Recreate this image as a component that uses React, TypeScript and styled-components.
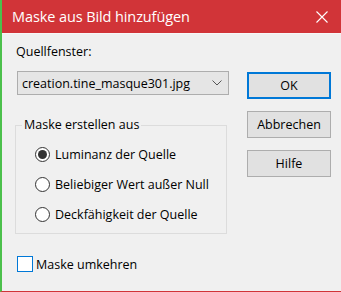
import React, { useState } from 'react';
import styled, { createGlobalStyle } from 'styled-components';

const GlobalStyle = createGlobalStyle`
  html, body {
    margin: 0;
    padding: 0;
    background: #f0f0f0;
  }
  body {
    font-family: 'Open Sans', 'Noto Sans', sans-serif;
  }
`;

const Window = styled.div`
  width: 341px;
  height: 292px;
  box-sizing: border-box;
  border-left: 2px solid #4cc04c;
  border-bottom: 1px solid #d13438;
  background: #f0f0f0;
  display: flex;
  flex-direction: column;
`;

const TitleBar = styled.div`
  height: 33px;
  background: #d13438;
  color: #fff;
  display: flex;
  align-items: center;
  justify-content: space-between;
  padding: 0 13px 0 10px;
  font-size: 14.5px;
  border-bottom: 1px solid #f7f7f7;
`;

const Title = styled.span`
  letter-spacing: -0.1px;
`;

const CloseIcon = styled.svg`
  width: 12px;
  height: 12px;
`;

const Body = styled.div`
  display: grid;
  grid-template-columns: 214px 84px;
  column-gap: 18px;
  padding: 0 0 0 13px;
  font-size: 12.5px;
  color: #000;
`;

const LeftColumn = styled.div`
  display: flex;
  flex-direction: column;
`;

const FieldLabel = styled.div`
  margin-top: 10px;
  line-height: 16px;
  margin-left: 1px;
`;

const Select = styled.div`
  margin: 11px 0 0 2px;
  height: 24px;
  box-sizing: border-box;
  border: 1px solid #adadad;
  background: #e5e5e5;
  display: flex;
  align-items: center;
  justify-content: space-between;
  padding: 0 6px 0 4px;
`;

const Group = styled.fieldset`
  margin: 22px 2px 0 0;
  padding: 0 0 6px 0;
  border: 1px solid #dcdcdc;
  height: 117px;
  box-sizing: border-box;
  min-width: 0;
`;

const Legend = styled.legend`
  margin-left: 6px;
  padding: 0 2px;
  line-height: 16px;
`;

const RadioList = styled.div`
  display: flex;
  flex-direction: column;
  padding: 13px 0 0 19px;
  gap: 14px;
`;

const OptionRow = styled.label`
  display: flex;
  align-items: center;
  gap: 5px;
  height: 16px;
  white-space: nowrap;
  cursor: default;
`;

const RadioCircle = styled.span<{ checked: boolean }>`
  width: 15px;
  height: 15px;
  flex: none;
  box-sizing: border-box;
  border-radius: 50%;
  border: 1px solid #333;
  background: #fff;
  display: flex;
  align-items: center;
  justify-content: center;

  &::after {
    content: '';
    width: 9px;
    height: 9px;
    border-radius: 50%;
    background: ${({ checked }) => (checked ? '#333' : 'transparent')};
  }
`;

const CheckRow = styled.label`
  display: flex;
  align-items: center;
  gap: 3px;
  margin: 22px 0 0 2px;
  height: 16px;
`;

const CheckBox = styled.span`
  width: 16px;
  height: 16px;
  box-sizing: border-box;
  border: 1px solid #0078d7;
  background: #fff;
`;

const ButtonColumn = styled.div`
  display: flex;
  flex-direction: column;
  gap: 12px;
  padding-top: 38px;
`;

const Button = styled.button<{ primary?: boolean }>`
  width: 84px;
  height: 27px;
  box-sizing: border-box;
  background: #e1e1e1;
  border: ${({ primary }) => (primary ? '2px solid #0078d7' : '1px solid #adadad')};
  font-family: inherit;
  font-size: 12.5px;
  color: #000;
  padding: 0;
`;

const OPTIONS = ['Luminanz der Quelle', 'Beliebiger Wert außer Null', 'Deckfähigkeit der Quelle'];

export default function App() {
  const [choice, setChoice] = useState(0);

  return (
    <>
      <GlobalStyle />
      <Window>
        <TitleBar>
          <Title>Maske aus Bild hinzufügen</Title>
          <CloseIcon viewBox="0 0 12 12">
            <path d="M0.5 0.5 L11.5 11.5 M11.5 0.5 L0.5 11.5" stroke="#fff" strokeWidth="1.1" />
          </CloseIcon>
        </TitleBar>
        <Body>
          <LeftColumn>
            <FieldLabel>Quellfenster:</FieldLabel>
            <Select>
              <span>creation.tine_masque301.jpg</span>
              <svg width="10" height="6" viewBox="0 0 10 6">
                <path d="M0.5 0.5 L5 5 L9.5 0.5" fill="none" stroke="#555" strokeWidth="1" />
              </svg>
            </Select>
            <Group>
              <Legend>Maske erstellen aus</Legend>
              <RadioList>
                {OPTIONS.map((opt, i) => (
                  <OptionRow key={opt} onClick={() => setChoice(i)}>
                    <RadioCircle checked={choice === i} />
                    {opt}
                  </OptionRow>
                ))}
              </RadioList>
            </Group>
            <CheckRow>
              <CheckBox />
              Maske umkehren
            </CheckRow>
          </LeftColumn>
          <ButtonColumn>
            <Button primary>OK</Button>
            <Button>Abbrechen</Button>
            <Button>Hilfe</Button>
          </ButtonColumn>
        </Body>
      </Window>
    </>
  );
}
